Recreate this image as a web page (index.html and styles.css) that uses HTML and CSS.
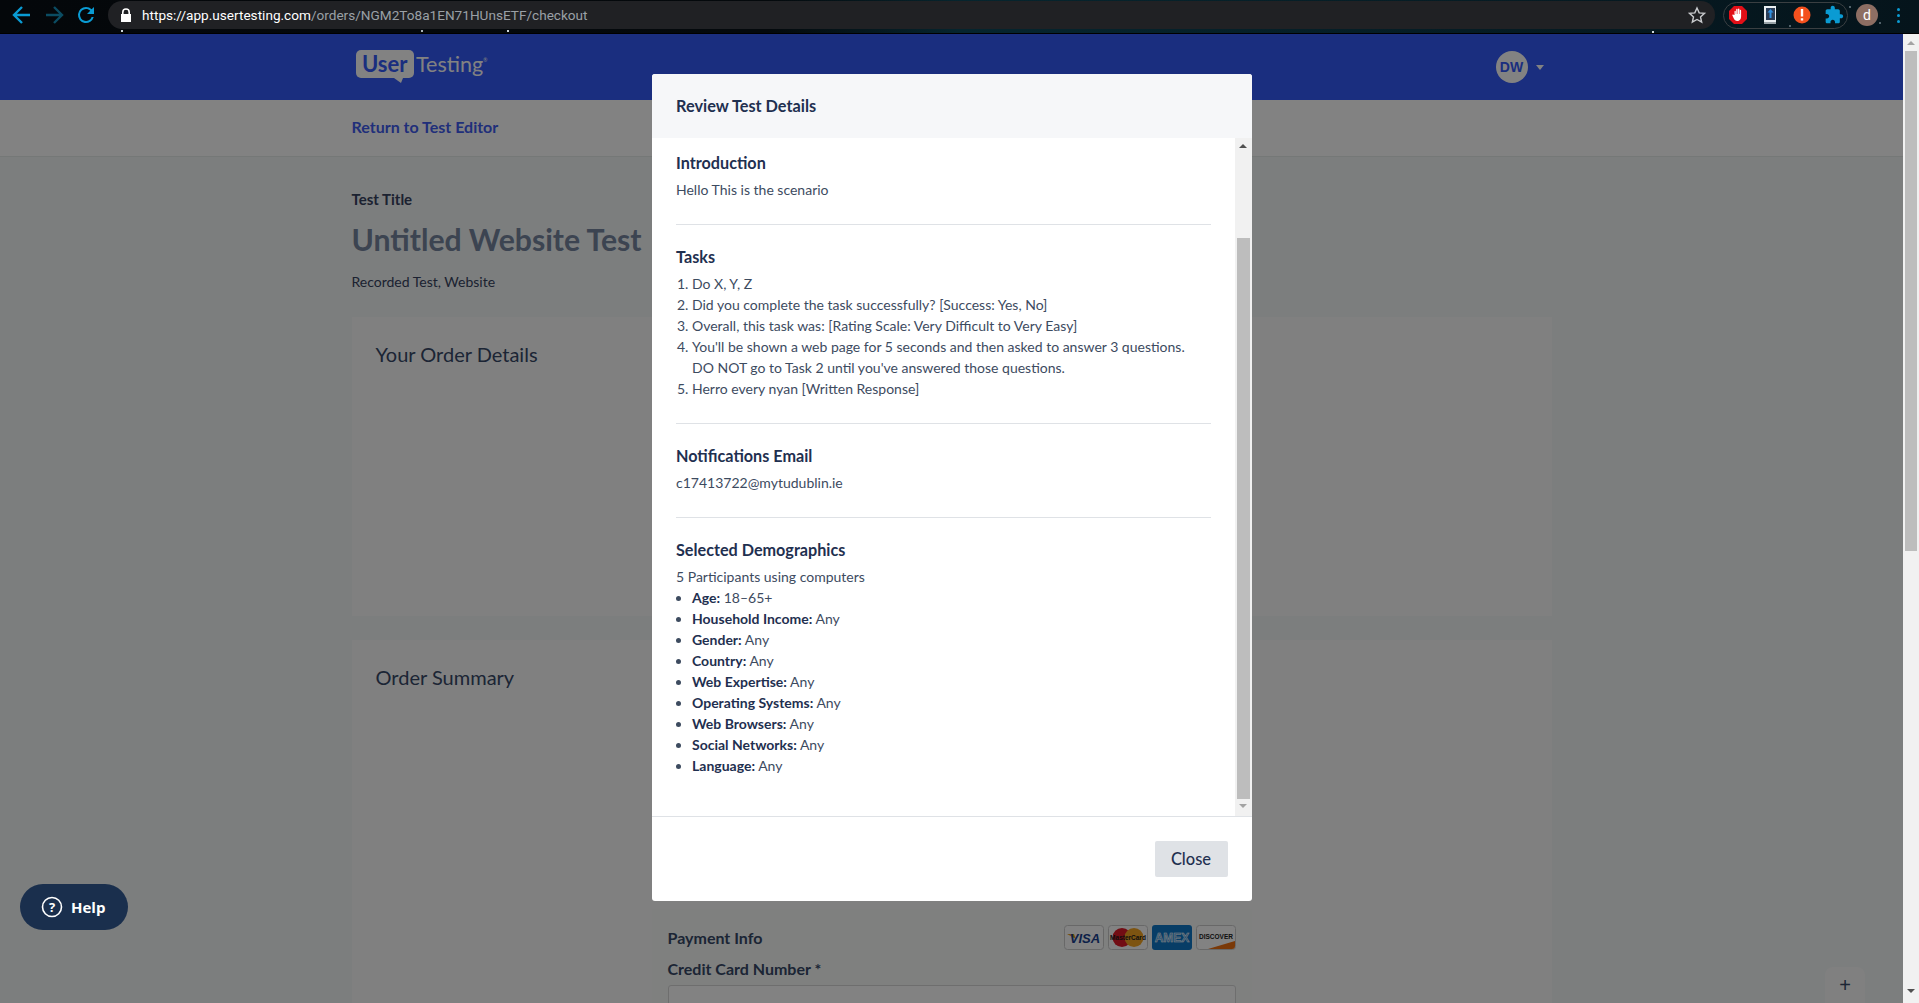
FILE: index.html
```html
<!DOCTYPE html>
<html lang="en">
<head>
  <meta charset="UTF-8">
  <title>UserTesting Checkout</title>
  <link rel="stylesheet" href="styles.css">
</head>
<body>
  <div class="browser-bar">
    <div class="nav-btns">
      <svg class="nav-icon" viewBox="0 0 24 24"><path d="M20 12H5M12 4l-8 8 8 8" fill="none" stroke="#0a9bd3" stroke-width="2.4"/></svg>
      <svg class="nav-icon" viewBox="0 0 24 24"><path d="M4 12h15M12 4l8 8-8 8" fill="none" stroke="#0b4c62" stroke-width="2.4"/></svg>
      <svg class="nav-icon" viewBox="0 0 24 24"><path d="M17.65 6.35A7.96 7.96 0 0 0 12 4a8 8 0 1 0 7.73 10h-2.08A6 6 0 1 1 12 6c1.66 0 3.14.69 4.22 1.78L13 11h7V4l-2.35 2.35z" fill="#0a9bd3"/></svg>
    </div>
    <div class="address">
      <svg class="lock" viewBox="0 0 12 14"><path d="M2 6V4.2a4 4 0 0 1 8 0V6h1v8H1V6h1zm1.6 0h4.8V4.2a2.4 2.4 0 0 0-4.8 0V6z" fill="#fff"/></svg>
      <span class="url"><b>https://app.usertesting.com</b>/orders/NGM2To8a1EN71HUnsETF/checkout</span>
      <svg class="star" viewBox="0 0 24 24"><path d="M12 3.5l2.6 5.9 6.4.6-4.8 4.3 1.4 6.3L12 17.4l-5.6 3.2 1.4-6.3L3 10l6.4-.6z" fill="none" stroke="#c9cbce" stroke-width="1.7"/></svg>
    </div>
    <div class="extensions">
      <svg class="ext" viewBox="0 0 20 20"><path d="M6 1h8l5 5v8l-5 5H6l-5-5V6z" fill="#e20f17"/><path d="M6.5 10V6.6c0-1 1.3-1 1.3 0V9h.4V4.6c0-1 1.4-1 1.4 0V9h.4V4.2c0-1 1.4-1 1.4 0V9h.4V5.4c0-1 1.3-1 1.3 0v6c0 2.800-1.600 4.600-3.800 4.600-1.800 0-2.800-.9-3.500-2.400l-1.400-3c-.4-1 .8-1.500 1.400-.7z" fill="#fff"/></svg>
      <svg class="ext" viewBox="0 0 20 20"><path d="M4 1h12v16H4z" fill="#e9eef0"/><path d="M6 3h9v12H6z" fill="#2a3d57"/><path d="M4 17h12v2H4z" fill="#99a3a8"/><path d="M10.500 4l3 3.500h-2V13h-2V7.500h-2z" fill="#2e8fe0"/></svg>
      <svg class="ext" viewBox="0 0 20 20"><circle cx="10" cy="10" r="8.500" fill="#f4511e"/><path d="M8.800 4h2.400v7.500H8.800zM8.800 13.200h2.400v2.400H8.800z" fill="#fff"/></svg>
      <svg class="ext" viewBox="0 0 24 24"><path d="M20.500 11H19V7c0-1.100-.9-2-2-2h-4V3.500C13 2.120 11.880 1 10.500 1S8 2.120 8 3.500V5H4c-1.100 0-1.990.9-1.990 2v3.800H3.500c1.490 0 2.700 1.210 2.700 2.700s-1.210 2.700-2.700 2.700H2V20c0 1.100.9 2 2 2h3.800v-1.500c0-1.490 1.210-2.700 2.700-2.700 1.490 0 2.700 1.210 2.700 2.700V22H17c1.100 0 2-.9 2-2v-4h1.500c1.380 0 2.500-1.120 2.500-2.500S21.880 11 20.500 11z" fill="#0a9bd3"/></svg>
    </div>
    <div class="profile">d</div>
    <div class="menu-dots"><i></i><i></i><i></i></div>
  </div>

  <div class="window">
    <div class="page">
      <header class="site-header">
        <div class="site-inner">
          <div class="logo">
            <span class="logo-user">User</span>
            <span class="logo-testing">Testing<sup>®</sup></span>
          </div>
          <div class="account">
            <div class="avatar">DW</div>
            <span class="caret"></span>
          </div>
        </div>
      </header>
      <div class="sub-bar">
        <div class="site-inner"><a class="back-link">Return to Test Editor</a></div>
      </div>
      <main class="content">
        <div class="label">Test Title</div>
        <h1 class="test-title">Untitled Website Test</h1>
        <div class="test-type">Recorded Test, Website</div>
        <section class="panel order-details">
          <h2>Your Order Details</h2>
        </section>
        <section class="panel order-summary">
          <h2>Order Summary</h2>
          <div class="payment">
            <div class="payment-head">
              <h3>Payment Info</h3>
              <div class="cards">
                <svg class="card" viewBox="0 0 40 25"><rect x=".5" y=".5" width="39" height="24" rx="3" fill="#fff" stroke="#ccc"/><path d="M3 9h7l2 5z" fill="#e8a020"/><text x="21" y="18" class="visa">VISA</text></svg>
                <svg class="card" viewBox="0 0 40 25"><rect x=".5" y=".5" width="39" height="24" rx="3" fill="#fff" stroke="#ccc"/><circle cx="14" cy="12.500" r="9.500" fill="#e01a28"/><circle cx="26" cy="12.500" r="9.500" fill="#f5a623"/><text x="20" y="15" class="mc">MasterCard</text></svg>
                <svg class="card" viewBox="0 0 40 25"><rect width="40" height="25" rx="3" fill="#0e78c8"/><text x="20" y="17" class="amex">AMEX</text></svg>
                <svg class="card" viewBox="0 0 40 25"><rect x=".5" y=".5" width="39" height="24" rx="3" fill="#fff" stroke="#ccc"/><path d="M12 24l27-8v5a3 3 0 0 1-3 3z" fill="#f07010"/><text x="20" y="13.500" class="disc">DISCOVER</text></svg>
              </div>
            </div>
            <label class="field-label">Credit Card Number *</label>
            <div class="field"></div>
          </div>
        </section>
      </main>
      <button class="float-plus">+</button>

      <div class="overlay">
        <div class="modal">
          <div class="modal-head">Review Test Details</div>
          <div class="modal-body">
            <div class="modal-scroll">
              <section class="detail first">
                <h4>Introduction</h4>
                <p>Hello This is the scenario</p>
              </section>
              <section class="detail">
                <h4>Tasks</h4>
                <ol>
                  <li>Do X, Y, Z</li>
                  <li>Did you complete the task successfully? [Success: Yes, No]</li>
                  <li>Overall, this task was: [Rating Scale: Very Difficult to Very Easy]</li>
                  <li>You'll be shown a web page for 5 seconds and then asked to answer 3 questions. DO NOT go to Task 2 until you've answered those questions.</li>
                  <li>Herro every nyan [Written Response]</li>
                </ol>
              </section>
              <section class="detail">
                <h4>Notifications Email</h4>
                <p>c17413722@mytudublin.ie</p>
              </section>
              <section class="detail last">
                <h4>Selected Demographics</h4>
                <p>5 Participants using computers</p>
                <ul>
                  <li><b>Age:</b> 18–65+</li>
                  <li><b>Household Income:</b> Any</li>
                  <li><b>Gender:</b> Any</li>
                  <li><b>Country:</b> Any</li>
                  <li><b>Web Expertise:</b> Any</li>
                  <li><b>Operating Systems:</b> Any</li>
                  <li><b>Web Browsers:</b> Any</li>
                  <li><b>Social Networks:</b> Any</li>
                  <li><b>Language:</b> Any</li>
                </ul>
              </section>
            </div>
            <div class="modal-track">
              <span class="arrow-up dark"></span>
              <div class="modal-thumb-gap"></div>
              <div class="modal-thumb"></div>
              <span class="arrow-down"></span>
            </div>
          </div>
          <div class="modal-foot">
            <button class="close-btn">Close</button>
          </div>
        </div>
      </div>

      <button class="help-btn">
        <svg class="help-icon" viewBox="0 0 22 22"><circle cx="11" cy="11" r="9.500" fill="none" stroke="#fff" stroke-width="1.600"/><text x="11" y="16" class="help-q">?</text></svg>
        Help
      </button>
    </div>

    <div class="page-track">
      <span class="arrow-up"></span>
      <div class="page-thumb"></div>
      <span class="arrow-down dark"></span>
    </div>
  </div>
</body>
</html>
```

FILE: styles.css
```css
* {
  box-sizing: border-box;
}

html, body {
  height: 100%;
}

body {
  margin: 0;
  overflow: hidden;
  font-family: Lato, Arial, sans-serif;
  background-color: #030b10;
}

/* browser chrome */
.browser-bar {
  display: flex;
  align-items: center;
  height: 34px;
  padding: 1px 19px 4px 0;
  border-bottom: 1px solid #000;
  background-color: #04090d;
  background-image:
    radial-gradient(circle at 122px 31px, #cfd8dc 1px, transparent 1.500px),
    radial-gradient(circle at 422px 31px, #aab4b8 1px, transparent 1.500px),
    radial-gradient(circle at 508px 31px, #cfd8dc 1px, transparent 1.500px),
    radial-gradient(circle at 1653px 32px, #cfd8dc 1px, transparent 1.500px),
    radial-gradient(circle at 1790px 26px, #52626a 1px, transparent 1.500px),
    radial-gradient(circle at 1850px 7px, #52626a 1px, transparent 1.500px),
    radial-gradient(circle at 1880px 23px, #52626a 1px, transparent 1.500px),
    linear-gradient(90deg, #04070a 0%, #04090c 40%, #06252e 50%, #05141b 100%);
}

.nav-btns {
  display: flex;
  gap: 8px;
  padding-left: 10px;
}

.nav-icon {
  width: 24px;
  height: 24px;
}

.address {
  flex: 1;
  display: flex;
  align-items: center;
  height: 28px;
  margin-left: 10px;
  padding: 0 8px 0 12px;
  border-radius: 14px;
  background-color: #202124;
}

.lock {
  width: 12px;
  height: 14px;
  margin-right: 10px;
}

.url {
  flex: 1;
  font-family: Roboto, Arial, sans-serif;
  font-size: 13.600px;
  color: #9aa0a6;
}

.url b {
  font-weight: 400;
  color: #fff;
}

.star {
  width: 20px;
  height: 20px;
}

.extensions {
  display: flex;
  align-items: center;
  gap: 12px;
  height: 27px;
  margin-left: 8px;
  padding: 0 3px 0 4px;
  border: 1px solid #3a3f42;
  border-radius: 14px;
}

.ext {
  width: 20px;
  height: 20px;
}

.profile {
  width: 22px;
  height: 22px;
  margin-left: 8px;
  border-radius: 50%;
  background-color: #8d6e63;
  color: #fff;
  font-family: Roboto, Arial, sans-serif;
  font-size: 14px;
  line-height: 22px;
  text-align: center;
}

.menu-dots {
  display: flex;
  flex-direction: column;
  gap: 3px;
  margin-left: 19px;
}

.menu-dots i {
  display: block;
  width: 3px;
  height: 3px;
  border-radius: 50%;
  background-color: #0a9bd3;
}

/* page */
.window {
  display: flex;
  height: 969px;
}

.page {
  position: relative;
  flex: 1;
  overflow: hidden;
  background-color: #f3f7f7;
}

.site-header {
  height: 66px;
  background-color: #335af9;
}

.site-inner {
  display: flex;
  align-items: center;
  justify-content: space-between;
  width: 1200px;
  height: 100%;
  margin: 0 auto;
}

.logo {
  display: flex;
  align-items: center;
  margin: -6px 0 0 4px;
  color: #fff;
}

.logo-user {
  position: relative;
  padding: 0 6.500px;
  border-radius: 5px;
  background-color: #fff;
  color: #335af9;
  font-size: 22px;
  font-weight: 700;
  line-height: 28px;
}

.logo-user::after {
  content: "";
  position: absolute;
  left: 38px;
  bottom: -5px;
  border-top: 5px solid #fff;
  border-left: 7px solid transparent;
  border-right: 2px solid transparent;
}

.logo-testing {
  margin-left: 2px;
  font-size: 21.500px;
  font-weight: 400;
}

.logo-testing sup {
  font-size: 5px;
  vertical-align: 10px;
}

.account {
  display: flex;
  align-items: center;
  gap: 8px;
  margin-right: 8px;
}

.avatar {
  width: 32px;
  height: 32px;
  border-radius: 50%;
  background-color: #fff;
  color: #335af9;
  font-family: "Liberation Sans", Arial, sans-serif;
  font-size: 14px;
  font-weight: 700;
  line-height: 32px;
  text-align: center;
}

.caret {
  border-top: 5px solid #fff;
  border-left: 4px solid transparent;
  border-right: 4px solid transparent;
}

.sub-bar {
  height: 57px;
  border-bottom: 1px solid #e5ecea;
  background-color: #fff;
}

.back-link {
  margin-top: -3px;
  color: #3f5cf0;
  font-size: 16px;
  font-weight: 700;
}

.content {
  width: 1200px;
  margin: 0 auto;
  padding-top: 32px;
}

.label {
  color: #374360;
  font-size: 15px;
  font-weight: 700;
  line-height: 21px;
}

.test-title {
  margin: 11px 0 0;
  color: #76859f;
  font-size: 30.200px;
  font-weight: 700;
  line-height: 36px;
}

.test-type {
  margin-top: 14px;
  color: #374360;
  font-size: 14px;
  line-height: 21px;
}

.panel {
  padding: 24px;
  background-color: #fbfbfb;
}

.panel h2 {
  margin: 0;
  color: #374968;
  font-size: 20px;
  font-weight: 400;
  line-height: 27px;
}

.order-details {
  height: 299px;
  margin-top: 25px;
}

.order-summary {
  margin-top: 24px;
  padding-bottom: 0;
}

.payment {
  width: 600px;
  height: 120px;
  margin: 218px auto 0;
  padding: 16px;
  background-color: #f9fcfa;
}

.payment-head {
  display: flex;
  align-items: center;
  justify-content: space-between;
}

.payment-head h3 {
  margin: 0;
  color: #374968;
  font-size: 16px;
  font-weight: 700;
}

.cards {
  display: flex;
  gap: 4px;
}

.card {
  width: 40px;
  height: 25px;
}

.visa {
  fill: #1a3f8f;
  font-family: "Liberation Sans", Arial, sans-serif;
  font-size: 13px;
  font-style: italic;
  font-weight: 700;
  text-anchor: middle;
}

.mc {
  fill: #1b1b1b;
  font-family: "Liberation Sans", Arial, sans-serif;
  font-size: 6.500px;
  font-weight: 700;
  text-anchor: middle;
}

.amex {
  fill: #4f9fe0;
  stroke: #fff;
  stroke-width: 0.5px;
  font-family: "Liberation Sans", Arial, sans-serif;
  font-size: 12px;
  font-weight: 700;
  text-anchor: middle;
}

.disc {
  fill: #222;
  font-family: "Liberation Sans", Arial, sans-serif;
  font-size: 6.500px;
  font-weight: 700;
  text-anchor: middle;
}

.field-label {
  display: block;
  margin-top: 7px;
  color: #374968;
  font-size: 16px;
  font-weight: 700;
  line-height: 24px;
}

.field {
  height: 40px;
  margin-top: 4px;
  border: 1px solid #d8d8d8;
  border-radius: 3px;
  background-color: #fff;
}

.float-plus {
  position: absolute;
  right: 38px;
  top: 933px;
  width: 40px;
  height: 60px;
  padding: 0 0 24px;
  border: none;
  border-radius: 8px;
  background-color: #fcfcfc;
  color: #374968;
  font-family: "Liberation Sans", Arial, sans-serif;
  font-size: 20px;
}

/* modal */
.overlay {
  position: absolute;
  inset: 0;
  padding-top: 40px;
  background-color: rgba(0, 0, 0, 0.49);
}

.modal {
  width: 600px;
  height: 827px;
  margin: 0 auto;
  display: flex;
  flex-direction: column;
  border-radius: 3px;
  overflow: hidden;
  background-color: #fff;
}

.modal-head {
  display: flex;
  align-items: center;
  height: 64px;
  padding: 0 0 2px 24.500px;
  background-color: #f6f7f9;
  color: #1f3050;
  font-size: 16.300px;
  font-weight: 700;
}

.modal-body {
  display: flex;
  height: 679px;
  border-bottom: 1px solid #dfe2e6;
}

.modal-scroll {
  flex: 1;
  padding: 0 23.500px 0 24.500px;
  overflow: hidden;
}

.detail {
  padding: 22px 0 24px;
  border-bottom: 1px solid #dfe2e6;
  color: #3d4b5f;
  font-size: 14px;
  line-height: 21px;
}

.detail.first {
  padding-top: 15px;
}

.detail.last {
  border-bottom: none;
}

.detail h4 {
  margin: -1px 0 6px;
  color: #1f3050;
  font-size: 16.200px;
  font-weight: 700;
}

.detail p {
  margin: 0;
}

.detail ol,
.detail ul {
  margin: 0;
  padding: 0 20px 0 16px;
}

.detail b {
  color: #1f3050;
  font-weight: 700;
}

.modal-track {
  display: flex;
  flex-direction: column;
  align-items: center;
  width: 17px;
  background-color: #f1f1f1;
}

.modal-track .arrow-up {
  margin-top: 6px;
}

.modal-thumb-gap {
  height: 90px;
}

.modal-thumb {
  width: 13px;
  height: 561px;
  background-color: #bdbdbd;
}

.modal-track .arrow-down {
  margin-top: 5px;
}

.arrow-up,
.arrow-down {
  display: block;
  width: 0;
  height: 0;
  border-left: 4px solid transparent;
  border-right: 4px solid transparent;
}

.arrow-up {
  border-bottom: 4px solid #a3a3a3;
}

.arrow-down {
  border-top: 4px solid #a3a3a3;
}

.arrow-up.dark {
  border-bottom-color: #505050;
}

.arrow-down.dark {
  border-top-color: #505050;
}

.modal-foot {
  display: flex;
  justify-content: flex-end;
  padding: 24px;
}

.close-btn {
  width: 73px;
  height: 36px;
  border: none;
  border-radius: 2px;
  background-color: #dfe2e6;
  color: #1f3050;
  font-family: Lato, Arial, sans-serif;
  font-size: 16.500px;
  font-weight: 500;
}

.help-btn {
  position: absolute;
  left: 20px;
  top: 850px;
  display: flex;
  align-items: center;
  gap: 8px;
  width: 108px;
  height: 46px;
  padding-left: 21px;
  border: none;
  border-radius: 23px;
  background-color: #1a2f4d;
  color: #fff;
  font-family: "Open Sans", Arial, sans-serif;
  font-size: 15px;
  font-weight: 700;
}

.help-icon {
  width: 22px;
  height: 22px;
}

.help-q {
  fill: #fff;
  font-family: "Open Sans", Arial, sans-serif;
  font-size: 13px;
  font-weight: 700;
  text-anchor: middle;
}

/* page scrollbar */
.page-track {
  display: flex;
  flex-direction: column;
  align-items: center;
  width: 16px;
  background-color: #f1f1f1;
}

.page-track .arrow-up {
  margin-top: 7px;
}

.page-thumb {
  width: 12px;
  height: 500px;
  margin-top: 6px;
  background-color: #bdbdbd;
}

.page-track .arrow-down {
  margin-top: 438px;
}
```
